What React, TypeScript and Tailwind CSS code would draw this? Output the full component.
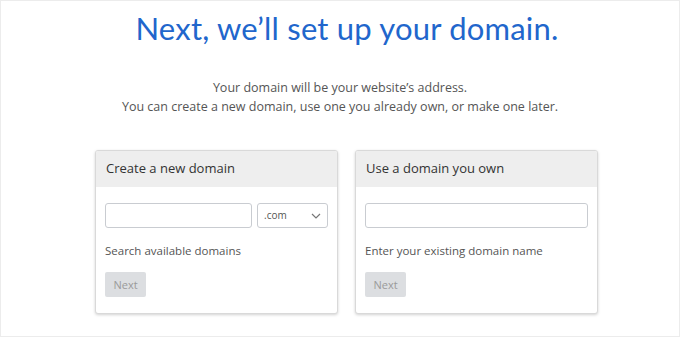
import React from "react";

function Card({ title, children }: { title: string; children: React.ReactNode }) {
  return (
    <div className="w-[243px] h-[164px] bg-white border border-[#d9d9d9] rounded-[3px] shadow-[0_1px_3px_rgba(0,0,0,0.18)] overflow-hidden">
      <div className="h-[36px] bg-[#eeeeee] flex items-center px-[10px] text-[13px] text-[#333] font-['Open_Sans',sans-serif]">
        {title}
      </div>
      <div className="px-[9px] pt-[16px]">{children}</div>
    </div>
  );
}

function NextBtn() {
  return (
    <div className="mt-[13px] w-[41px] h-[25px] rounded-[2px] bg-[#dcdee1] flex items-center justify-center text-[11px] text-[#9a9a9a] font-['Open_Sans',sans-serif]">
      Next
    </div>
  );
}

export default function App() {
  return (
    <div className="w-[680px] h-[337px] bg-white border border-[#ececec] box-border font-['Open_Sans',sans-serif] flex flex-col">
      <div className="h-[55px] flex items-center justify-center pl-[14px] text-[31px] text-[#2166cc] font-['Lato',sans-serif] font-normal tracking-[0.2px]">
        Next, we’ll set up your domain.
      </div>
      <div className="mt-[22px] text-center text-[12.5px] leading-[19px] text-[#555]">
        <div>Your domain will be your website’s address.</div>
        <div>You can create a new domain, use one you already own, or make one later.</div>
      </div>
      <div className="mt-[34px] flex gap-[17px] pl-[94px]">
        <Card title="Create a new domain">
          <div className="flex gap-[5px]">
            <div className="w-[147px] h-[25px] border border-[#c9ccd1] rounded-[3px]" />
            <div className="w-[71px] h-[25px] border border-[#c9ccd1] rounded-[3px] flex items-center justify-between pl-[6px] pr-[6px] text-[10px] text-[#555]">
              <span>.com</span>
              <svg width="10" height="6" viewBox="0 0 10 6" fill="none" stroke="#777" strokeWidth="1.2">
                <path d="M1 1l4 4 4-4" />
              </svg>
            </div>
          </div>
          <div className="mt-[14px] text-[11.5px] text-[#555]">Search available domains</div>
          <NextBtn />
        </Card>
        <Card title="Use a domain you own">
          <div className="w-[223px] h-[25px] border border-[#c9ccd1] rounded-[3px]" />
          <div className="mt-[14px] text-[11.5px] text-[#555]">Enter your existing domain name</div>
          <NextBtn />
        </Card>
      </div>
    </div>
  );
}
